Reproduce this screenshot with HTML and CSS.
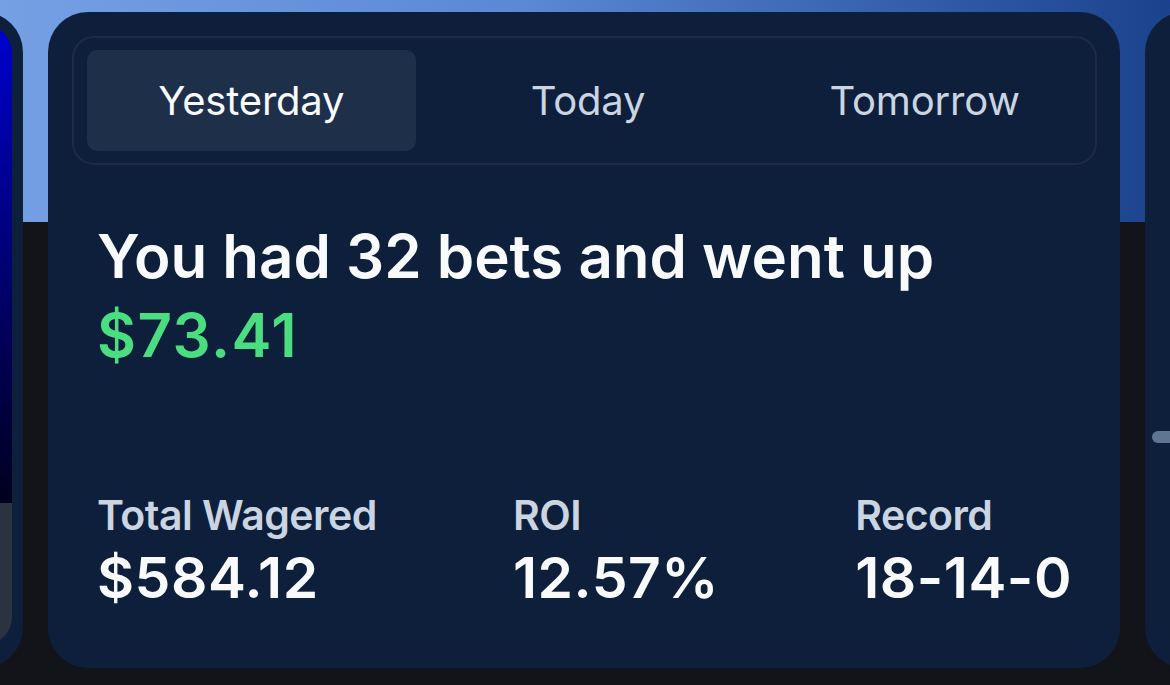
FILE: index.html
```html
<!DOCTYPE html>
<html lang="en">
<head>
  <meta charset="UTF-8" />
  <title>Daily Recap</title>
  <meta name="viewport" content="width=device-width, initial-scale=1.0" />
  <link rel="stylesheet" href="styles.css">
</head>
<body>
  <div class="track">
    <div class="card side-card left">
      <div class="promo">
        <div class="promo-art"></div>
        <div class="promo-foot"></div>
      </div>
    </div>

    <div class="card recap">
      <div class="tabs">
        <button class="tab active">Yesterday</button>
        <button class="tab">Today</button>
        <button class="tab">Tomorrow</button>
      </div>

      <div class="recap-body">
        <h1 class="headline">You had 32 bets and went up <span class="gain">$73.41</span></h1>

        <div class="stats">
          <div class="stat">
            <div class="stat-label">Total Wagered</div>
            <div class="stat-value">$584.12</div>
          </div>
          <div class="stat">
            <div class="stat-label">ROI</div>
            <div class="stat-value">12.57%</div>
          </div>
          <div class="stat">
            <div class="stat-label">Record</div>
            <div class="stat-value">18-14-0</div>
          </div>
        </div>
      </div>
    </div>

    <div class="card side-card right">
      <div class="pill"></div>
    </div>
  </div>
</body>
</html>
```

FILE: styles.css
```css
body {
  margin: 0;
  height: 685px;
  overflow: hidden;
  font-family: Inter, "Noto Sans", sans-serif;
  background: linear-gradient(90deg, #76a0e4, #5a88d4 45%, #1b428c) top left / 100% 222px no-repeat, #121419;
}

.track {
  display: flex;
  gap: 25px;
  padding-top: 12px;
  margin-left: -1049px;
}

.card {
  flex: 0 0 1072px;
  height: 656px;
  box-sizing: border-box;
  background: #0e1f3b;
  border-radius: 40px;
}

/* left neighbour card */
.side-card.left {
  padding: 13px 11px 23px 13px;
}

.promo {
  height: 100%;
  display: flex;
  flex-direction: column;
  border-radius: 28px;
  overflow: hidden;
}

.promo-art {
  flex: 1;
  background: linear-gradient(180deg, #0000cf, #00006a 55%, #00001e);
}

.promo-foot {
  height: 142px;
  background: #2a3340;
}

/* right neighbour card */
.side-card.right {
  padding: 419px 0 0 7px;
}

.pill {
  width: 40px;
  height: 12px;
  border-radius: 6px;
  background: #5f7592;
}

/* main recap card */
.recap {
  display: flex;
  flex-direction: column;
  padding: 24px 23px 56px 24px;
}

.tabs {
  display: flex;
  gap: 8px;
  padding: 12px 6px 12px 13px;
  border: 2px solid #1c2c47;
  border-radius: 22px;
}

.tab {
  flex: 1;
  height: 101px;
  border: none;
  border-radius: 10px;
  background: transparent;
  color: #cbd5e1;
  font-family: inherit;
  font-size: 40px;
  font-weight: 400;
  letter-spacing: -0.2px;
}

.tab.active {
  background: #1e2f4a;
  color: #f8fafc;
}

.recap-body {
  flex: 1;
  display: flex;
  flex-direction: column;
  padding: 0 25px;
}

.headline {
  margin: 52px 0 0;
  font-size: 60px;
  font-weight: 600;
  line-height: 79px;
  letter-spacing: 0;
  color: #f8fafc;
}

.gain {
  display: block;
  color: #4ade80;
  letter-spacing: 1.5px;
}

.stats {
  margin-top: auto;
  display: flex;
  justify-content: space-between;
}

.stat-label {
  font-size: 41px;
  font-weight: 600;
  line-height: 50px;
  letter-spacing: -0.5px;
  color: #cbd5e1;
}

.stat-value {
  margin-top: 4px;
  font-size: 57px;
  font-weight: 600;
  line-height: 68px;
  letter-spacing: 0.5px;
  color: #f8fafc;
}
```
